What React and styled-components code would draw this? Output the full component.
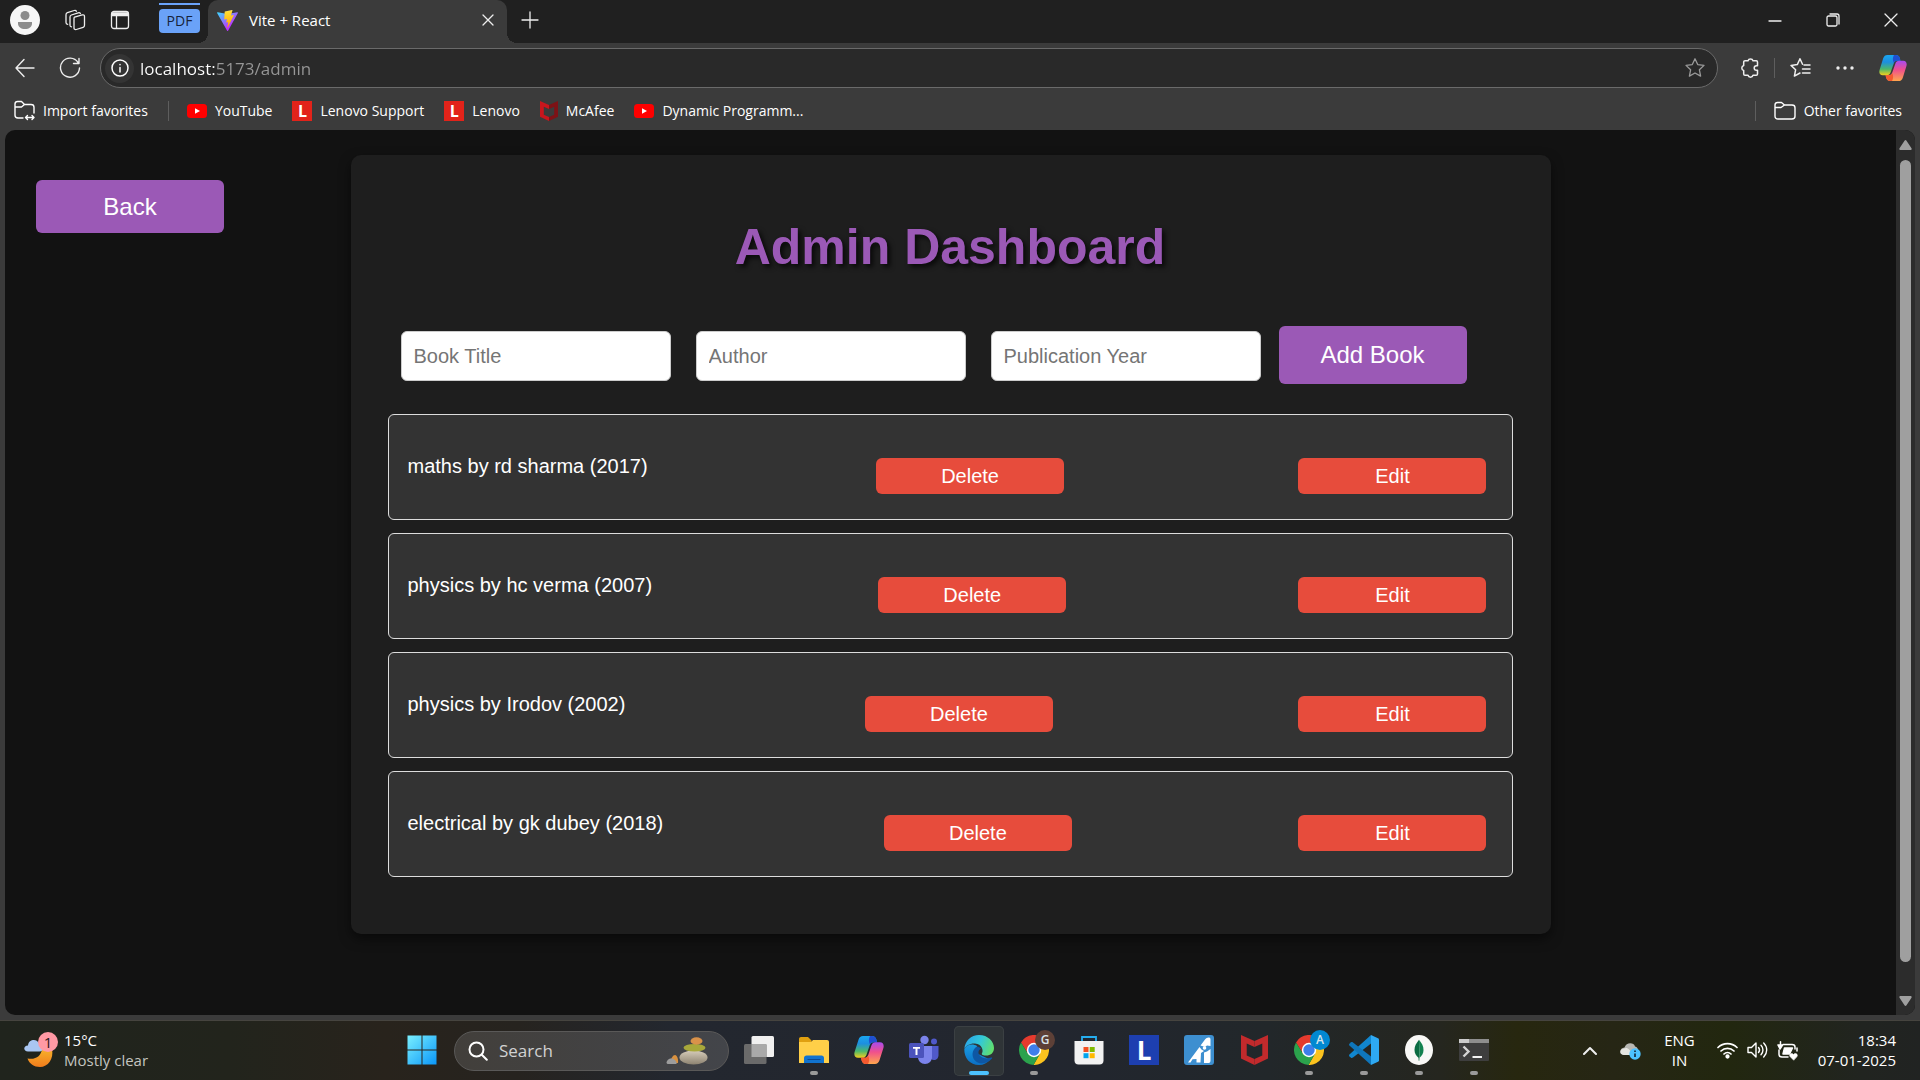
import React from "react";
import styled, { createGlobalStyle, css } from "styled-components";

const GlobalStyle = createGlobalStyle`
  *, *::before, *::after { box-sizing: border-box; }
  body { margin: 0; background: #3b3b3b; }
  button, input { font: inherit; color: inherit; margin: 0; }
  button { cursor: pointer; }
`;

const UI = `"Open Sans", "Noto Sans", sans-serif`;
const PAGE = `"Liberation Sans", Arial, sans-serif`;

/* ---------- shell ---------- */
const Desktop = styled.div`
  display: flex;
  flex-direction: column;
  height: 100vh;
  overflow: hidden;
  font: 14px/20px ${UI};
  color: #fff;
`;

const Browser = styled.div`
  flex: 1;
  min-height: 0;
  display: flex;
  flex-direction: column;
  background: #3b3b3b;
`;

const Row = styled.div`
  display: flex;
  align-items: center;
`;

const IconButton = styled.button`
  display: flex;
  align-items: center;
  justify-content: center;
  flex: none;
  width: ${(p) => p.$w || 45}px;
  height: 40px;
  padding: 0;
  border: 0;
  background: none;
  color: ${(p) => p.$color || "#eee"};
`;

/* ---------- tab strip ---------- */
const TabStrip = styled(Row)`
  height: 43px;
  background: #202020;
  align-items: flex-start;
`;

const Avatar = styled.span`
  width: 30px;
  height: 30px;
  border-radius: 50%;
  background: #f6f6f6;
  display: grid;
  place-items: center;
`;

const PdfTab = styled.a`
  width: 41px;
  height: 30px;
  margin: 3px 8px 0 19px;
  border-top: 2px solid #6aa2f8;
  padding-top: 4px;
  color: #16223a;
  text-decoration: none;
  span {
    display: block;
    height: 24px;
    border-radius: 4px;
    background: #6aa2f8;
    line-height: 24px;
    text-align: center;
  }
`;

const Tab = styled.div`
  position: relative;
  display: flex;
  align-items: center;
  gap: 11px;
  width: 299px;
  height: 43px;
  padding: 0 0 3px 9px;
  background: #3b3b3b;
  border-radius: 10px 10px 0 0;
  font-size: 15px;
  &::before,
  &::after {
    content: "";
    position: absolute;
    bottom: 0;
    width: 10px;
    height: 10px;
  }
  &::before {
    right: 100%;
    background: radial-gradient(circle at 0 0, transparent 10px, #3b3b3b 10px);
  }
  &::after {
    left: 100%;
    background: radial-gradient(circle at 100% 0, transparent 10px, #3b3b3b 10px);
  }
`;

const TabTitle = styled.span`
  flex: 1;
`;

const WindowControls = styled.div`
  display: flex;
  margin-left: auto;
`;

/* ---------- toolbar ---------- */
const Toolbar = styled(Row)`
  height: 50px;
  padding: 0 2px;
`;

const AddressBar = styled.label`
  flex: 1;
  display: flex;
  align-items: center;
  height: 40px;
  margin: 0 9px 0 8px;
  padding-left: 4px;
  border: 1px solid #6a6a6a;
  border-radius: 20px;
  background: #292929;
  font-size: 17px;
`;

const InfoBadge = styled.span`
  display: grid;
  place-items: center;
  width: 29px;
  height: 29px;
  border-radius: 50%;
  background: #343434;
`;

const UrlInput = styled.input`
  flex: 1;
  height: 30px;
  padding: 0;
  margin-left: 6px;
  border: 0;
  outline: 0;
  background: linear-gradient(90deg, #fff 75px, #979797 75px);
  background-clip: text;
  -webkit-background-clip: text;
  -webkit-text-fill-color: transparent;
`;

const Divider = styled.span`
  width: 1px;
  height: 20px;
  margin-left: ${(p) => p.$before || 0}px;
  margin-right: ${(p) => p.$after || 0}px;
  background: #5e5e5e;
`;

const Bookmarks = styled.nav`
  display: flex;
  align-items: center;
  height: 37px;
  padding: 0 18px 2px 14px;
`;

const Bookmark = styled.a`
  display: flex;
  align-items: center;
  gap: 8px;
  margin-right: 20px;
  color: #fff;
  text-decoration: none;
  white-space: nowrap;
  &:last-child { margin-right: 0; }
`;

const Spacer = styled.span`
  flex: 1;
`;

const LenovoTile = styled.span`
  width: 20px;
  height: 20px;
  background: #e2231a;
  font: bold 16px/20px ${UI};
  text-align: center;
`;

/* ---------- viewport ---------- */
const Viewport = styled.div`
  flex: 1;
  min-height: 0;
  display: flex;
  margin: 0 5px;
  border-radius: 10px;
  overflow: hidden;
  background: #121212;
`;

const Page = styled.main`
  flex: 1;
  display: grid;
  grid-template-columns: 1fr minmax(0, 1200px) 1fr;
  align-items: start;
  padding-top: 25px;
  font-family: ${PAGE};
`;

const ScrollTrack = styled.div`
  display: flex;
  flex-direction: column;
  align-items: center;
  width: 19px;
  padding: 10px 0 9px;
  background: #2c2c2c;
`;

const ScrollThumb = styled.div`
  flex: 1;
  width: 11px;
  margin: 10px 0 34px;
  border-radius: 6px;
  background: #9f9f9f;
`;

const PrimaryButton = styled.button`
  width: 188px;
  height: ${(p) => p.$h}px;
  padding: 0;
  border: 0;
  border-radius: 6px;
  background: #9b59b6;
  color: #fff;
  font-size: 24px;
`;

const BackSlot = styled.div`
  padding: 25px 0 0 31px;
`;

const Card = styled.section`
  padding: 63px 38px 57px 37px;
  border-radius: 10px;
  background: #1e1e1e;
  box-shadow: 0 5px 12px rgba(0, 0, 0, 0.5);
`;

const Title = styled.h1`
  margin: 0 0 50px;
  color: #9b59b6;
  font-size: 50px;
  line-height: 58px;
  text-align: center;
  text-shadow: 3px 3px 5px rgba(0, 0, 0, 0.7);
`;

const BookForm = styled.form`
  display: flex;
  align-items: center;
  padding-left: 13px;
  margin-bottom: 30px;
`;

const BookInput = styled.input`
  width: 270px;
  height: 50px;
  margin: 2px 25px 0 0;
  padding: 0 12px;
  border: 1px solid #ccc;
  border-radius: 6px;
  background: #fff;
  color: #222;
  font-size: 20px;
  &::placeholder { color: #757575; opacity: 1; }
  &:last-of-type { margin-right: 18px; }
`;

const BookList = styled.ul`
  display: flex;
  flex-direction: column;
  gap: 13px;
  margin: 0;
  padding: 0;
  list-style: none;
`;

const BookItem = styled.li`
  display: flex;
  align-items: center;
  justify-content: space-between;
  padding: 19px;
  border: 1px solid #ddd;
  border-radius: 6px;
  background: #333;
  font-size: 20px;
`;

const BookText = styled.span`
  padding-bottom: 2px;
`;

const RowButton = styled.button`
  width: 188px;
  height: 36px;
  margin: 24px 6px 6px;
  padding: 0;
  border: 0;
  border-radius: 6px;
  background: #e74c3c;
  color: #fff;
`;

/* ---------- taskbar ---------- */
const Taskbar = styled.footer`
  display: flex;
  align-items: center;
  height: 60px;
  margin-top: 5px;
  border-top: 1px solid #46443f;
  font-size: 15px;
  background: linear-gradient(90deg, #20241d 0, #22241c 12%, #28231c 20%, #26231f 27%, #23272f 35%,
    #22262f 55%, #22272a 66%, #25261f 75%, #27270f 79%, #262615 84%, #22270f 90%, #212420 97%, #212322 100%);
`;

const Weather = styled.button`
  display: flex;
  align-items: center;
  gap: 10px;
  width: 397px;
  height: 50px;
  padding: 0 0 2px 24px;
  border: 0;
  background: none;
  text-align: left;
  small { display: block; font-size: 15px; color: #c4c4c0; }
`;

const Apps = styled.nav`
  display: flex;
  align-items: center;
  gap: 5px;
`;

const TaskButton = styled.button`
  position: relative;
  display: grid;
  place-items: center;
  width: 50px;
  height: 50px;
  padding: 0 0 1px;
  border: 0;
  border-radius: 5px;
  background: none;
  ${(p) => p.$active && css`
    background: #2f3437;
    box-shadow: inset 0 0 0 1px #3b4043;
  `}
  ${(p) => p.$open && css`
    &::after {
      content: "";
      position: absolute;
      bottom: 1px;
      width: ${p.$active ? 20 : 8}px;
      height: 4px;
      border-radius: 2px;
      background: ${p.$active ? "#4cc2ff" : "#9a9a9a"};
    }
  `}
`;

const SearchPill = styled.label`
  display: flex;
  align-items: center;
  gap: 11px;
  width: 275px;
  height: 40px;
  margin-left: 2px;
  padding: 0 20px 0 13px;
  border: 1px solid #5a5958;
  border-radius: 20px;
  background: linear-gradient(90deg, #423f3b, #43454a);
  input {
    flex: 1;
    min-width: 0;
    padding: 0;
    border: 0;
    outline: 0;
    background: none;
    font-size: 17px;
  }
  input::placeholder { color: #d2d2d2; opacity: 1; }
`;

const Badge = styled.span`
  position: absolute;
  top: 4px;
  right: 4px;
  width: 20px;
  height: 20px;
  border-radius: 50%;
  background: ${(p) => p.$bg};
  color: #d8e4ea;
  font: 600 12px/20px ${UI};
  text-align: center;
`;

const LTile = styled.span`
  width: 30px;
  height: 30px;
  background: #1d3fb0;
  color: #fff;
  font: bold 26px/30px ${UI};
`;

const Tray = styled.div`
  display: flex;
  align-items: center;
  margin-left: auto;
  padding-right: 24px;
`;

const TrayText = styled.div`
  padding-bottom: 1px;
  text-align: ${(p) => p.$align || "center"};
  margin: 0 ${(p) => p.$mr || 0}px 0 ${(p) => p.$ml || 0}px;
`;

const TrayIcons = styled.div`
  display: flex;
  gap: ${(p) => p.$gap}px;
`;

const WeatherIcon = styled.span`
  position: relative;
  display: flex;
  b {
    position: absolute;
    top: -1px;
    right: -4px;
    width: 20px;
    height: 20px;
    border-radius: 50%;
    background: #ff99a4;
    color: #2a1518;
    font-weight: 400;
    text-align: center;
  }
`;

/* ---------- drawings ---------- */
const Line = ({ w, h = w, vb, sw = 1.3, children }) => (
  <svg width={w} height={h} viewBox={vb || `0 0 ${w} ${h}`} fill="none" stroke="currentColor"
    strokeWidth={sw} strokeLinecap="round" strokeLinejoin="round" aria-hidden="true">{children}</svg>
);

const Workspaces = () => (
  <Line w={22}>
    <path d="M10.500 8.200l7.700-2.300c1.300-.4 2.300.3 2.300 1.500v8.900c0 1-.5 1.700-1.400 2l-6.800 2.200c-1.300.4-2.300-.3-2.300-1.600V9.800c0-.8-.1-1.300.5-1.600Z" />
    <path d="M7.500 17.800c-1-.1-1.500-.7-1.500-1.600V8c0-1 .5-1.700 1.400-2l6.800-2.200c1-.3 1.800 0 2.200.7" />
    <path d="M3.700 15.300c-1-.1-1.700-.7-1.700-1.700V5.700c0-1 .5-1.700 1.400-2l6.800-2.200c1-.3 1.800 0 2.200.7" />
  </Line>
);

const PanelIcon = () => (
  <Line w={20}>
    <rect x="1.500" y="1.500" width="17" height="17" rx="2.500" />
    <path d="M2 3h16v2.500H2Z" fill="currentColor" />
    <path d="M6.500 6v12" />
  </Line>
);

const ViteLogo = () => (
  <svg width="21" height="21" viewBox="0 0 256 257" aria-hidden="true">
    <defs>
      <linearGradient id="va" x1="-.8%" x2="57.600%" y1="7.700%" y2="78.400%"><stop offset="0" stopColor="#41D1FF" /><stop offset="1" stopColor="#BD34FE" /></linearGradient>
      <linearGradient id="vb" x1="43.400%" x2="50.300%" y1="2.200%" y2="89%"><stop offset="0" stopColor="#FFEA83" /><stop offset=".08" stopColor="#FFDD35" /><stop offset="1" stopColor="#FFA800" /></linearGradient>
    </defs>
    <path fill="url(#va)" d="M255.153 37.938L134.897 252.976c-2.483 4.440-8.862 4.466-11.382.048L.875 37.958c-2.746-4.814 1.371-10.646 6.827-9.670l120.385 21.517a6.537 6.537 0 0 0 2.322-.004l117.867-21.483c5.438-.991 9.574 4.796 6.877 9.620Z" />
    <path fill="url(#vb)" d="M185.432.063L96.440 17.501a3.268 3.268 0 0 0-2.634 3.014l-5.474 92.456a3.268 3.268 0 0 0 3.997 3.378l24.777-5.718c2.318-.535 4.413 1.507 3.936 3.838l-7.361 36.047c-.495 2.426 1.782 4.500 4.151 3.780l15.304-4.649c2.372-.720 4.652 1.360 4.150 3.788l-11.698 56.621c-.732 3.542 3.979 5.473 5.943 2.437l1.313-2.028l72.516-144.720c1.215-2.423-.880-5.186-3.540-4.672l-25.505 4.922c-2.396.462-4.435-1.770-3.759-4.114l16.646-57.705c.677-2.350-1.370-4.583-3.769-4.113Z" />
  </svg>
);

const Copilot = ({ w = 30, h = 27 }) => (
  <svg width={w} height={h} viewBox="0 0 30 27" preserveAspectRatio="none" aria-hidden="true">
    <defs>
      <linearGradient id="ca" x1="0" y1="0" x2="0" y2="1"><stop offset="0" stopColor="#1aa6f0" /><stop offset=".35" stopColor="#1d8fe0" /><stop offset=".7" stopColor="#4cb86a" /><stop offset="1" stopColor="#f5cf1c" /></linearGradient>
      <linearGradient id="cb" x1="0" y1="1" x2="0" y2="0"><stop offset="0" stopColor="#a64af0" /><stop offset=".45" stopColor="#f0508c" /><stop offset="1" stopColor="#ffa64d" /></linearGradient>
    </defs>
    <path fill="url(#ca)" d="M9 0h9c2 0 3.500 1 4.200 3l.8 3h-3.500c-2 0-3.200 1-3.800 3l-3.200 9c-.7 2-2 3-4 3H4C1 21-.3 18.500.6 15.500l3.900-12C5.300 1.200 6.800 0 9 0Z" />
    <path fill="#1f4fd0" d="M16 0h2c2 0 3.500 1 4.200 3l.8 3h-3.500c-2 0-3 .8-3.500 2.200C14.500 6 14.500 2.500 16 0Z" />
    <path fill="url(#cb)" transform="rotate(180 15 13.500)" d="M9 0h9c2 0 3.500 1 4.200 3l.8 3h-3.500c-2 0-3.200 1-3.800 3l-3.200 9c-.7 2-2 3-4 3H4C1 21-.3 18.500.6 15.500l3.900-12C5.300 1.200 6.800 0 9 0Z" />
    <path fill="#f4592f" d="M14 27h-2c-2 0-3.500-1-4.200-3L7 21h3.500c2 0 3-.8 3.500-2.200C15.500 21 15.500 24.500 14 27Z" />
  </svg>
);

const YouTube = () => (
  <svg width="20" height="20" viewBox="0 0 20 20" aria-hidden="true">
    <rect y="3" width="20" height="14" rx="3.500" fill="#f00" /><path d="M8 7.200v5.600l5-2.800Z" fill="#fff" />
  </svg>
);

const McAfee = ({ w, h, left, right }) => (
  <svg width={w} height={h} viewBox="0 0 26 30" preserveAspectRatio="none" aria-hidden="true">
    <path fill={left} d="M0 0l13 6v6L5.500 8.500v12L13 24v6L0 23.500Z" />
    <path fill={right} d="M26 0L13 6v6l7.500-3.500v12L13 24v6l13-6.500Z" />
  </svg>
);

const Windows = () => (
  <svg width="30" height="30" viewBox="0 0 30 30" aria-hidden="true">
    <defs><linearGradient id="wa" x1="0" y1="0" x2="1" y2="1"><stop offset="0" stopColor="#7af0ff" /><stop offset="1" stopColor="#0a96f8" /></linearGradient></defs>
    <path fill="url(#wa)" d="M.5.500h14v14H.5Zm15 0h14v14h-14Zm-15 15h14v14H.5Zm15 0h14v14h-14Z" />
  </svg>
);

const Stones = () => (
  <svg width="42" height="28" viewBox="0 0 42 28" aria-hidden="true">
    <defs><linearGradient id="st" x1="0" y1="0" x2="0" y2="1"><stop offset="0" stopColor="#d6ccba" /><stop offset="1" stopColor="#8d8371" /></linearGradient></defs>
    <path d="M4 26c1-5 3-8 5-8s3.500 4 3 8Z" fill="#d9913f" />
    <path d="M.5 26c0-3 3-5 5.500-4.500S11 24.500 10.500 27H1.500Z" fill="#9c9c9c" />
    <ellipse cx="27.500" cy="20.500" rx="14" ry="7" fill="url(#st)" />
    <ellipse cx="28.500" cy="10.800" rx="11" ry="3.800" fill="#a8a83a" />
    <ellipse cx="30.500" cy="4" rx="6" ry="3.700" fill="#d9924a" />
  </svg>
);

const TaskView = () => (
  <svg width="30" height="28" viewBox="0 0 30 28" aria-hidden="true">
    <rect x="7.500" width="22.500" height="21" rx="1.500" fill="#f0f0f0" />
    <rect y="8" width="22.500" height="20" rx="1.500" fill="#6a6a6a" />
    <rect x="7.500" y="8" width="15" height="13" fill="#a9a9a9" />
  </svg>
);

const Explorer = () => (
  <svg width="30" height="28" viewBox="0 0 30 28" aria-hidden="true">
    <path d="M0 3c0-1.200.8-2 2-2h7l3.500 3.500V9H0Z" fill="#e0a010" />
    <path d="M0 6h12l2-2h14c1.200 0 2 .8 2 2v21H0Z" fill="#ffcf48" />
    <path d="M5 27v-5c0-1.500 1-2.500 2.500-2.500h15c1.500 0 2.500 1 2.500 2.500v5Z" fill="#1173cf" />
    <path d="M8.500 23.500h13" stroke="#0b4a94" />
  </svg>
);

const Teams = () => (
  <svg width="30" height="30" viewBox="0 0 30 30" aria-hidden="true">
    <circle cx="25" cy="6.500" r="3" fill="#5059c9" /><circle cx="15.500" cy="5" r="4.200" fill="#7b83eb" />
    <path d="M21 11h8.500v9c0 3-2 5-4.500 5s-4-2-4-4Z" fill="#5059c9" />
    <path d="M9 11h14v11c0 4-3 7-7 7s-7-3-7-7Z" fill="#7b83eb" />
    <rect y="8" width="15" height="15" rx="1.500" fill="#4b53bc" />
    <path d="M4 12h7v1.800H8.500V20h-2v-6.200H4Z" fill="#fff" />
  </svg>
);

const Edge = () => (
  <svg width="30" height="30" viewBox="0 0 30 30" aria-hidden="true">
    <defs>
      <linearGradient id="ea" x1="0" y1=".3" x2="1" y2=".6"><stop offset="0" stopColor="#2aa5e8" /><stop offset=".5" stopColor="#33c8d8" /><stop offset="1" stopColor="#62e06a" /></linearGradient>
      <linearGradient id="eb" x1="0" y1="0" x2="0" y2="1"><stop offset="0" stopColor="#1b9de2" /><stop offset="1" stopColor="#0b6fc4" /></linearGradient>
    </defs>
    <path fill="url(#eb)" d="M.3 14C3 9 9 8.500 13 11l1 8 12 5.500C23.500 28 19.500 30 15 30 6 30 0 23 .3 14Z" />
    <path fill="url(#ea)" d="M.3 14C1 6 7 0 15 0c9 0 15 6.500 15 13 0 5-3.500 7.500-8 7.500-4 0-4.800-1.200-3.800-2.800C19.500 15.500 18 9 11 8.500 6 8.200 2 10.500.3 14Z" />
    <path fill="#0e57a4" d="M12 12c-4 3.500-4.500 9-1.500 13 4 5 12 4.500 17.500-1.500.5-.7 0-1.200-.8-.9-6 2.300-12.200-.6-12.700-4.600-.2-1.800.6-3.400 2.500-4.500C15.500 12 13.500 11.500 12 12Z" />
  </svg>
);

const Chrome = () => (
  <svg width="30" height="30" viewBox="0 0 30 30" aria-hidden="true">
    <path fill="#e53a2e" d="M15 8h13.300A15 15 0 0 0 2 7.500l6.900 11L15 15Z" />
    <path fill="#fcc31e" d="M28.300 8A15 15 0 0 1 14.500 30l6.600-11.500L15 15V8Z" />
    <path fill="#2ba24c" d="M2 7.500A15 15 0 0 0 14.500 30l6.600-11.500L15 15l-6.100 3.500Z" />
    <circle cx="15" cy="15" r="7.200" fill="#fff" /><circle cx="15" cy="15" r="5.700" fill="#3f7eea" />
  </svg>
);

const Store = () => (
  <svg width="30" height="30" viewBox="0 0 30 30" aria-hidden="true">
    <path d="M8 7V2h14v5" fill="none" stroke="#25aef0" strokeWidth="1.800" />
    <path d="M.5 6h29v19.500c0 2.500-1.500 4-4 4h-21c-2.500 0-4-1.500-4-4Z" fill="#f2f2f2" />
    <path fill="#f25022" d="M9.500 12h5v5h-5Z" /><path fill="#7fba00" d="M15.700 12h5v5h-5Z" />
    <path fill="#00a4ef" d="M9.500 18.200h5v5h-5Z" /><path fill="#ffb900" d="M15.700 18.200h5v5h-5Z" />
  </svg>
);

const Assist = () => (
  <svg width="30" height="30" viewBox="0 0 30 30" aria-hidden="true">
    <rect width="30" height="30" rx="3" fill="#3d8fd0" />
    <path fill="#fff" d="M4 27.500L15.500 12l2 2.500 2.500 1.500-3 2-.5 9.500h-4V24l-4 .2-2 3.300Z" />
    <path fill="#fff" d="M16.500 10.500L21 4.500c1.500-2 5.500-3 5.500 0v6.500l-3.500-.5-2 1.500Z" />
    <path fill="#fff" d="M20 17.500l3-1 3.500-2.500v11.500c0 2-1 2.500-2.500 2.500h-4Z" />
    <circle cx="20.500" cy="13" r="1.800" fill="#fff" />
  </svg>
);

const VSCode = () => (
  <svg width="30" height="30" viewBox="0 0 30 30" aria-hidden="true">
    <path fill="#1187cf" d="M22 0v8.500L4 22.500c-.8.600-1.500.6-2 .2L.4 21.200c-.5-.6-.5-1.200 0-1.700Z" />
    <path fill="#0f76bb" d="M22 30v-8.500L4 7.500c-.8-.6-1.500-.6-2-.2L.4 8.800c-.5.6-.5 1.200 0 1.700Z" />
    <path fill="#2ea9f3" d="M22 0l7 3.300c.6.300 1 .8 1 1.500v20.400c0 .7-.4 1.200-1 1.500L22 30Z" />
  </svg>
);

const Mongo = () => (
  <svg width="28" height="30" viewBox="0 0 28 28" preserveAspectRatio="none" aria-hidden="true">
    <circle cx="14" cy="14" r="14" fill="#f8f8f6" />
    <path fill="#12814f" d="M14 4.500c3 3.500 4.500 6 4.500 9.500 0 3.300-1.700 5.700-4 7.300Z" />
    <path fill="#0a6b42" d="M14 4.500c-3 3.500-4.500 6-4.500 9.500 0 3.300 1.800 5.700 4 7.300l.2 2.700h.6l.2-2.700Z" />
  </svg>
);

const Terminal = () => (
  <svg width="30" height="22" viewBox="0 0 30 22" aria-hidden="true">
    <rect width="30" height="22" rx="1" fill="#3e3e3e" /><path d="M0 0h30v4H0Z" fill="#8e8e8e" /><path d="M0 0h10v4H0Z" fill="#ccc" />
    <path d="M4.500 7.500l5 5-5 5" fill="none" stroke="#d4d4d4" strokeWidth="2.400" /><path d="M13.500 18h9.500" stroke="#f2f2f2" strokeWidth="2" />
  </svg>
);

const MoonCloud = () => (
  <svg width="30" height="34" viewBox="0 0 30 34" aria-hidden="true">
    <defs><linearGradient id="mo" x1="0" y1="0" x2="0" y2="1"><stop offset="0" stopColor="#f7b22a" /><stop offset="1" stopColor="#f07c1c" /></linearGradient></defs>
    <path fill="url(#mo)" d="M28 16c2 10-4 18-12 18C10 34 5.500 31 3.500 25.500 12 27 17 23 18 16Z" />
    <path fill="#a9c6f2" d="M4 18.500c-5 0-5-6 0-6 .5-6.500 9-7 10.500-2.500 5 0 6.500 8.500 1 8.500Z" />
  </svg>
);

/* ---------- data ---------- */
const BOOKS = [
  { title: "maths", author: "rd sharma", year: 2017 },
  { title: "physics", author: "hc verma", year: 2007 },
  { title: "physics", author: "Irodov", year: 2002 },
  { title: "electrical", author: "gk dubey", year: 2018 },
];

const FIELDS = ["Book Title", "Author", "Publication Year"];

const BOOKMARKS = [
  { label: "YouTube", icon: <YouTube /> },
  { label: "Lenovo Support", icon: <LenovoTile aria-hidden="true">L</LenovoTile> },
  { label: "Lenovo", icon: <LenovoTile aria-hidden="true">L</LenovoTile> },
  { label: "McAfee", icon: <McAfee w={18} h={20} left="#c8161d" right="#7d1216" /> },
  { label: "Dynamic Programm...", icon: <YouTube /> },
];

const APPS = [
  { name: "Task view", icon: <TaskView /> },
  { name: "File Explorer", icon: <Explorer />, open: true },
  { name: "Copilot", icon: <Copilot w={30} h={28} /> },
  { name: "Teams", icon: <Teams /> },
  { name: "Edge", icon: <Edge />, open: true, active: true },
  { name: "Chrome G", icon: <><Chrome /><Badge $bg="#5d4037">G</Badge></>, open: true },
  { name: "Store", icon: <Store /> },
  { name: "Lenovo Vantage", icon: <LTile aria-hidden="true">L</LTile> },
  { name: "Assistant", icon: <Assist /> },
  { name: "McAfee", icon: <McAfee w={27} h={30} left="#c22a2c" right="#c22a2c" /> },
  { name: "Chrome A", icon: <><Chrome /><Badge $bg="#0288d1">A</Badge></>, open: true },
  { name: "Visual Studio Code", icon: <VSCode />, open: true },
  { name: "MongoDB Compass", icon: <Mongo />, open: true },
  { name: "Terminal", icon: <Terminal />, open: true },
];

export default function App() {
  return (
    <Desktop>
      <GlobalStyle />
      <Browser>
        <TabStrip>
          <IconButton $w={50} aria-label="Profile">
            <Avatar>
              <svg width="16" height="18" viewBox="0 0 16 18" fill="#8c8c8c" aria-hidden="true">
                <circle cx="8" cy="4.500" r="4.500" /><path d="M1 11h14v1.500C15 16 12 18 8 18s-7-2-7-5.500Z" />
              </svg>
            </Avatar>
          </IconButton>
          <IconButton $w={50} aria-label="Workspaces"><Workspaces /></IconButton>
          <IconButton $w={40} aria-label="Tab actions"><PanelIcon /></IconButton>
          <PdfTab href="#pdf"><span>PDF</span></PdfTab>
          <Tab>
            <ViteLogo />
            <TabTitle>Vite + React</TabTitle>
            <IconButton $w={38} aria-label="Close tab"><Line w={12}><path d="M1 1l10 10M11 1L1 11" /></Line></IconButton>
          </Tab>
          <IconButton aria-label="New tab"><Line w={18}><path d="M9 1v16M1 9h16" /></Line></IconButton>
          <WindowControls>
            <IconButton $w={58} aria-label="Minimize"><Line w={14}><path d="M1 8h12" /></Line></IconButton>
            <IconButton $w={58} aria-label="Restore">
              <Line w={14}><rect x="1" y="3" width="10" height="10" rx="1.500" /><path d="M4 1h7a2 2 0 0 1 2 2v8" /></Line>
            </IconButton>
            <IconButton $w={58} aria-label="Close"><Line w={14}><path d="M1 1l12 12M13 1L1 13" /></Line></IconButton>
          </WindowControls>
        </TabStrip>

        <Toolbar>
          <IconButton aria-label="Back"><Line w={20} sw={1.4}><path d="M19 10H1M9 1.500L1 10l8 8.500" /></Line></IconButton>
          <IconButton aria-label="Refresh"><Line w={22} sw={1.4}><path d="M19 5.500A9.500 9.500 0 1 0 20.500 11M20 1.500v5h-5.500" /></Line></IconButton>
          <AddressBar>
            <InfoBadge>
              <Line w={18} sw={1.5}><circle cx="9" cy="9" r="8" /><path d="M9 8.500V13M9 5.500v.2" /></Line>
            </InfoBadge>
            <UrlInput aria-label="Address" defaultValue="localhost:5173/admin" />
            <IconButton $color="#9a9a9a" type="button" aria-label="Add to favorites">
              <Line w={22}><path d="M11 1.800l2.700 5.800 6.300.8-4.600 4.400 1.200 6.300-5.600-3.100-5.600 3.100 1.200-6.300L2 8.400l6.300-.8Z" /></Line>
            </IconButton>
          </AddressBar>
          <IconButton aria-label="Extensions">
            <Line w={22} sw={1.5}>
              <path d="M6 3.800h3a2.600 2.600 0 0 1 5 0h3.300c.8 0 1.200.5 1.200 1.200v3.700h-1a2.300 2.300 0 0 0 0 4.600h1V17c0 .8-.5 1.300-1.200 1.300H14a2.600 2.600 0 0 1-5 0H6c-.8 0-1.300-.5-1.300-1.300v-3.500a2.600 2.600 0 0 1 0-5V5c0-.8.5-1.200 1.300-1.200Z" />
            </Line>
          </IconButton>
          <Divider $before={2} $after={2} />
          <IconButton aria-label="Favorites">
            <Line w={22} sw={1.5}>
              <path d="M13.500 7.200L11 1.800 8.300 7.600 2 8.400l4.600 4.400L5.400 19.100l5.600-3.100M15 8h6M13.500 12H21M13.500 16H21" />
            </Line>
          </IconButton>
          <IconButton aria-label="Settings and more">
            <svg width="18" height="4" viewBox="0 0 18 4" fill="currentColor" aria-hidden="true">
              <circle cx="2" cy="2" r="1.700" /><circle cx="9" cy="2" r="1.700" /><circle cx="16" cy="2" r="1.700" />
            </svg>
          </IconButton>
          <IconButton $w={51} aria-label="Copilot"><Copilot w={28} h={26} /></IconButton>
        </Toolbar>

        <Bookmarks>
          <Bookmark href="#import">
            <Line w={21} sw={1.4}><path d="M9 18H4c-1.700 0-3-1-3-2.700V4c0-1.700 1-2.500 2.500-2.500h4l3 3H17c1.700 0 3 1 3 2.700V13M1 7h6.500l3-2.500M11.500 17.500h8M13.500 15.500l-2 2 2 2M18 15.500l2 2-2 2" /></Line>
            Import favorites
          </Bookmark>
          <Divider $after={18} />
          {BOOKMARKS.map((b) => (
            <Bookmark key={b.label} href="#bookmark">{b.icon}{b.label}</Bookmark>
          ))}
          <Spacer />
          <Divider $after={18} />
          <Bookmark href="#other">
            <Line w={22} h={20} sw={1.4}><path d="M1 5V4c0-1.700 1-2.500 2.500-2.500h4L10.500 4H18c1.800 0 3 1 3 2.700v8.600c0 1.700-1.200 2.700-3 2.700H4c-1.800 0-3-1-3-2.700ZM1 6.500h6L10.500 4" /></Line>
            Other favorites
          </Bookmark>
        </Bookmarks>

        <Viewport>
          <Page>
            <BackSlot><PrimaryButton $h={53}>Back</PrimaryButton></BackSlot>
            <Card>
              <Title>Admin Dashboard</Title>
              <BookForm onSubmit={(e) => e.preventDefault()}>
                {FIELDS.map((f) => <BookInput key={f} type="text" placeholder={f} aria-label={f} />)}
                <PrimaryButton $h={58}>Add Book</PrimaryButton>
              </BookForm>
              <BookList>
                {BOOKS.map((b) => (
                  <BookItem key={b.author}>
                    <BookText>{`${b.title} by ${b.author} (${b.year})`}</BookText>
                    <RowButton>Delete</RowButton>
                    <RowButton>Edit</RowButton>
                  </BookItem>
                ))}
              </BookList>
            </Card>
          </Page>
          <ScrollTrack aria-hidden="true">
            <svg width="13" height="10" viewBox="0 0 13 10" fill="#9f9f9f"><path d="M5.500.8a1.200 1.200 0 0 1 2 0l5 7.500c.4.800 0 1.700-1 1.700h-10c-1 0-1.400-.9-1-1.700Z" /></svg>
            <ScrollThumb />
            <svg width="13" height="10" viewBox="0 0 13 10" fill="#9f9f9f"><path d="M5.500 9.200a1.200 1.200 0 0 0 2 0l5-7.500c.4-.8 0-1.700-1-1.700h-10c-1 0-1.400.9-1 1.700Z" /></svg>
          </ScrollTrack>
        </Viewport>
      </Browser>

      <Taskbar>
        <Weather>
          <WeatherIcon><MoonCloud /><b>1</b></WeatherIcon>
          <span>15°C<small>Mostly clear</small></span>
        </Weather>
        <Apps>
          <TaskButton aria-label="Start"><Windows /></TaskButton>
          <SearchPill>
            <Line w={20} sw={2}><circle cx="8.500" cy="8.500" r="7" /><path d="M13.800 13.800l5 5" /></Line>
            <input type="search" placeholder="Search" aria-label="Search" />
            <Stones />
          </SearchPill>
          {APPS.map((a) => (
            <TaskButton key={a.name} aria-label={a.name} $open={a.open} $active={a.active}>{a.icon}</TaskButton>
          ))}
        </Apps>
        <Tray>
          <IconButton $w={40} aria-label="Show hidden icons"><Line w={14} h={10} sw={2}><path d="M1 8l6-6 6 6" /></Line></IconButton>
          <IconButton $w={40} aria-label="OneDrive">
            <svg width="21" height="18" viewBox="0 0 21 18" aria-hidden="true">
              <path d="M5 13c-6 0-6-7-.5-7.500C6 0 14 0 15 4.500c4 .5 5 8.500 0 8.500Z" fill="#b8b8b4" /><path d="M4 13c-5 0-5-6 0-6.500 3-1.500 6 0 8 6.500Z" fill="#e6e6e2" />
              <circle cx="15" cy="12" r="5.700" fill="#4cc2ff" /><path d="M15 11.500v3.500M15 8.500v1.400" stroke="#123" strokeWidth="1.600" />
            </svg>
          </IconButton>
          <TrayText $ml={14} $mr={22}>ENG<br />IN</TrayText>
          <TrayIcons $gap={9}>
            <Line w={21} h={18} sw={1.7}><path d="M1 6.500a13.500 13.500 0 0 1 19 0M4 10a9.300 9.300 0 0 1 13 0M7 13a5 5 0 0 1 7 0" /><circle cx="10.500" cy="15.500" r="1.300" fill="currentColor" /></Line>
            <Line w={21} h={18} sw={1.4}><path d="M1 6.500h3.500L9 2v14l-4.500-4.500H1ZM11.500 6.500c1.300 1.500 1.300 3.500 0 5M14 4.300c2.600 2.700 2.600 6.700 0 9.400M16.700 2c4 4 4 10 0 14" /></Line>
            <Line w={21} h={20} sw={1.5}>
              <path d="M6 3.500h9c2 0 3 1 3 2.500v2M2 9v4.500c0 1.500 1 2.500 3 2.500h6M20 7v3" />
              <path d="M7.500 7h8l-3 6H6Z" fill="currentColor" /><path d="M3.500 0.800v3M1 4h4.500L3 8Z" fill="currentColor" />
              <path d="M16.500 19l-3.500-3.500c-1.500-2.500 2-4 3.500-2 1.500-2 5-.5 3.500 2Z" fill="currentColor" strokeWidth=".6" />
            </Line>
          </TrayIcons>
          <TrayText $align="right" $ml={20}>18:34<br />07-01-2025</TrayText>
        </Tray>
      </Taskbar>
    </Desktop>
  );
}
